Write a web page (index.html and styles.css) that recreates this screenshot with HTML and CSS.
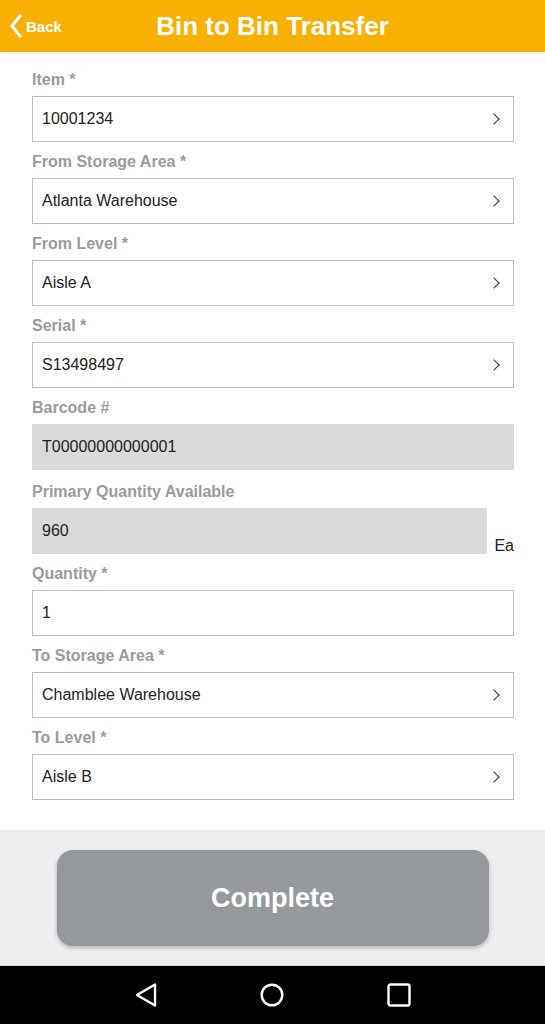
FILE: index.html
```html
<!DOCTYPE html>
<html lang="en">
<head>
    <meta charset="UTF-8">
    <meta name="viewport" content="width=device-width, initial-scale=1.0">
    <title>Bin to Bin Transfer</title>
    <link rel="stylesheet" href="styles.css">
</head>
<body>
    <div class="screen">
        <header class="top-bar">
            <a class="back-link" href="#">
                <svg class="back-icon" width="14" height="24" viewBox="0 0 14 24">
                    <path d="M11 2 L3 12 L11 22" fill="none" stroke="#fff" stroke-width="3" stroke-linecap="square"/>
                </svg>
                <span>Back</span>
            </a>
            <h1>Bin to Bin Transfer</h1>
        </header>

        <main class="form">
            <div class="field">
                <label>Item *</label>
                <div class="box select"><span>10001234</span><i class="chev"></i></div>
            </div>
            <div class="field">
                <label>From Storage Area *</label>
                <div class="box select"><span>Atlanta Warehouse</span><i class="chev"></i></div>
            </div>
            <div class="field">
                <label>From Level *</label>
                <div class="box select"><span>Aisle A</span><i class="chev"></i></div>
            </div>
            <div class="field">
                <label>Serial *</label>
                <div class="box select"><span>S13498497</span><i class="chev"></i></div>
            </div>
            <div class="field">
                <label>Barcode #</label>
                <div class="box readonly"><span>T00000000000001</span></div>
            </div>
            <div class="field qty-field">
                <label>Primary Quantity Available</label>
                <div class="qty-row">
                    <div class="box readonly"><span>960</span></div>
                    <span class="unit">Ea</span>
                </div>
            </div>
            <div class="field">
                <label>Quantity *</label>
                <div class="box"><span>1</span></div>
            </div>
            <div class="field">
                <label>To Storage Area *</label>
                <div class="box select"><span>Chamblee Warehouse</span><i class="chev"></i></div>
            </div>
            <div class="field">
                <label>To Level *</label>
                <div class="box select"><span>Aisle B</span><i class="chev"></i></div>
            </div>
        </main>

        <div class="actions">
            <button class="complete-btn" type="button">Complete</button>
        </div>

        <nav class="nav-bar">
            <svg width="24" height="26" viewBox="0 0 24 26">
                <path d="M21 2.5 L21 23.5 L3 13 Z" fill="none" stroke="#fff" stroke-width="2.4" stroke-linejoin="round"/>
            </svg>
            <svg width="26" height="26" viewBox="0 0 26 26">
                <circle cx="13" cy="13" r="10.3" fill="none" stroke="#fff" stroke-width="2.4"/>
            </svg>
            <svg width="26" height="26" viewBox="0 0 26 26">
                <rect x="2.5" y="2.5" width="21" height="21" rx="2" fill="none" stroke="#fff" stroke-width="2.4"/>
            </svg>
        </nav>
    </div>
</body>
</html>
```

FILE: styles.css
```css
body {
    margin: 0;
    font-family: "Liberation Sans", Arial, sans-serif;
    background-color: #ffffff;
    color: #222;
}
.screen {
    width: 545px;
    height: 1024px;
    display: flex;
    flex-direction: column;
    overflow: hidden;
}
.top-bar {
    height: 52px;
    background-color: #f8b003;
    display: flex;
    align-items: center;
    justify-content: center;
    position: relative;
    box-shadow: 0 2px 3px rgba(0, 0, 0, 0.08);
    z-index: 1;
}
.top-bar h1 {
    margin: 0;
    color: #fff;
    font-size: 26px;
    font-weight: bold;
}
.back-link {
    position: absolute;
    left: 9px;
    top: 14px;
    display: flex;
    align-items: center;
    gap: 3px;
    color: #fff;
    text-decoration: none;
    font-weight: bold;
    font-size: 15px;
}
.form {
    flex: 1;
    padding: 18px 31px 0 32px;
    display: flex;
    flex-direction: column;
    gap: 10px;
}
.field label {
    display: block;
    height: 20px;
    line-height: 20px;
    margin-bottom: 6px;
    font-size: 16px;
    font-weight: bold;
    color: #9b9b9b;
}
.qty-field {
    margin-top: 2px;
}
.box {
    height: 46px;
    box-sizing: border-box;
    border: 1px solid #bdbdbd;
    display: flex;
    align-items: center;
    padding: 0 12px 0 9px;
    font-size: 16px;
    color: #222;
}
.box span {
    flex: 1;
}
.box.readonly {
    background-color: #d9d9d9;
    border-color: #d9d9d9;
}
.chev {
    width: 7px;
    height: 7px;
    border-right: 1.5px solid #333;
    border-top: 1.5px solid #333;
    transform: rotate(45deg);
    margin-right: 3px;
}
.qty-row {
    display: flex;
    align-items: flex-end;
}
.qty-row .box {
    width: 456px;
}
.unit {
    margin-left: 7px;
    font-size: 16px;
    line-height: 16px;
    color: #222;
}
.actions {
    height: 136px;
    background-color: #eeeeee;
    display: flex;
    align-items: flex-start;
    justify-content: center;
    padding-top: 20px;
    box-sizing: border-box;
    border-bottom: 1px solid #cfcfcf;
}
.complete-btn {
    width: 432px;
    height: 96px;
    border: none;
    border-radius: 16px;
    background-color: #96999b;
    color: #fff;
    font-family: "Liberation Sans", Arial, sans-serif;
    font-size: 27px;
    font-weight: bold;
    box-shadow: 0 2px 4px rgba(0, 0, 0, 0.25);
}
.nav-bar {
    height: 58px;
    background-color: #000;
    display: flex;
    align-items: center;
    justify-content: center;
    gap: 101px;
}
```
